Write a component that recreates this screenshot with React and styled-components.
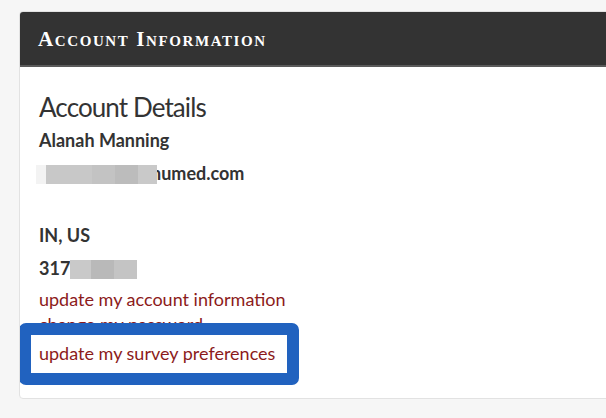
import styled, { createGlobalStyle } from "styled-components";

const GlobalStyle = createGlobalStyle`
  html, body {
    margin: 0;
    background: #f6f6f6;
    overflow: hidden;
  }
  body {
    font-family: "Lato", "Liberation Sans", sans-serif;
  }
`;

const Page = styled.div`
  padding: 11px 0 0 19px;
  width: 660px;
`;

const Card = styled.section`
  background: #fff;
  border: 1px solid #e2e2e2;
  border-radius: 4px;
  overflow: hidden;
  height: 388px;
  box-sizing: border-box;
`;

const Header = styled.header`
  background: #333;
  border-bottom: 2px solid #5a5a5a;
  height: 55px;
  box-sizing: border-box;
  display: flex;
  align-items: center;
  padding: 0 18px;
`;

const HeaderTitle = styled.h2`
  margin: 0;
  color: #fff;
  font-family: "Liberation Serif", serif;
  font-weight: bold;
  font-variant: small-caps;
  font-size: 21px;
  letter-spacing: 1.6px;
  padding-top: 1px;
`;

const Body = styled.div`
  padding: 23px 19px 0;
  position: relative;
`;

const Title = styled.h3`
  margin: 0;
  font-size: 26px;
  font-weight: 400;
  color: #333;
  line-height: 34px;
  letter-spacing: -0.9px;
`;

const Line = styled.p`
  margin: 0;
  font-weight: bold;
  font-size: 18px;
  color: #333;
  line-height: 33px;
  margin-bottom: ${(p) => p.$gap || 0}px;
`;

const Redact = styled.span`
  position: relative;
  display: inline-flex;
  vertical-align: -4px;
  height: 19px;
  margin-right: ${(p) => p.$overlap || 0}px;
  z-index: 1;
`;

const Pixel = styled.span`
  display: block;
  height: 100%;
  width: ${(p) => p.$w}px;
  background: ${(p) => p.$c};
`;

const Links = styled.ul`
  position: relative;
  list-style: none;
  margin: 2px 0 0;
  padding: 0;
`;

const LinkItem = styled.li`
  font-size: 18px;
  line-height: 24.5px;
  color: #8c1b1b;
`;

const Callout = styled.div`
  position: absolute;
  left: -20px;
  top: 36px;
  width: 280px;
  height: 62px;
  box-sizing: border-box;
  border: 12px solid #2162bf;
  border-radius: 7px;
  background: #fff;
  display: flex;
  align-items: center;
  padding: 0 0 2px 8px;
  font-size: 18px;
  color: #8c1b1b;
`;

export default function App() {
  return (
    <>
      <GlobalStyle />
      <Page>
        <Card>
          <Header>
            <HeaderTitle>Account Information</HeaderTitle>
          </Header>
          <Body>
            <Title>Account Details</Title>
            <Line>Alanah Manning</Line>
            <Line $gap={29}>
              <Redact $overlap={-6} style={{ marginLeft: -3 }}>
                <Pixel $w={10} $c="#f3f3f3" />
                <Pixel $w={46} $c="#c8c8c8" />
                <Pixel $w={23} $c="#c3c3c3" />
                <Pixel $w={23} $c="#bcbcbc" />
                <Pixel $w={19} $c="#c9c9c9" />
              </Redact>
              numed.com
            </Line>
            <Line>IN, US</Line>
            <Line>
              317
              <Redact>
                <Pixel $w={21} $c="#c9c9c9" />
                <Pixel $w={23} $c="#b9b9b9" />
                <Pixel $w={23} $c="#c4c4c4" />
              </Redact>
            </Line>
            <Links>
              <LinkItem>update my account information</LinkItem>
              <LinkItem>change my password</LinkItem>
              <LinkItem>update my survey preferences</LinkItem>
              <Callout>update my survey preferences</Callout>
            </Links>
          </Body>
        </Card>
      </Page>
    </>
  );
}
